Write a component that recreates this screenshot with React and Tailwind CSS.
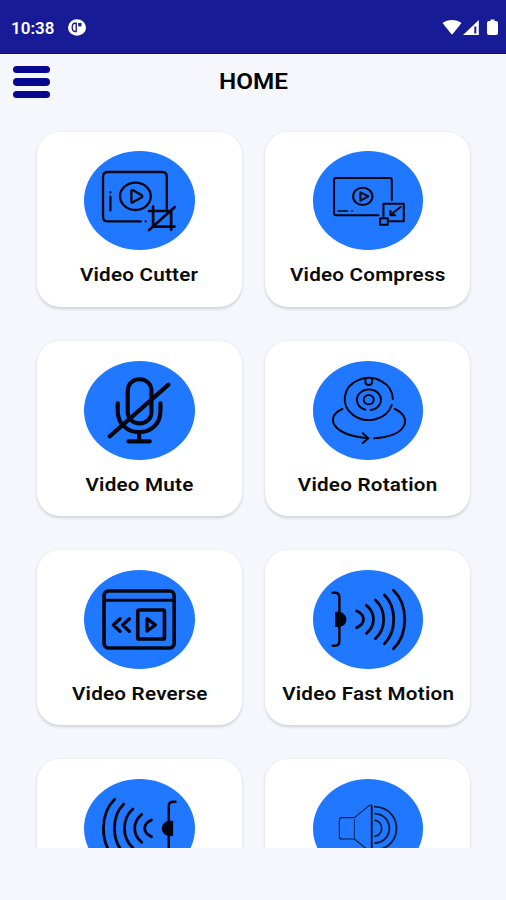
import React from "react";

function Oval({ box, children }) {
  return (
    <div className="h-[99px] w-[110.5px] shrink-0 overflow-hidden rounded-[50%] bg-[#1f78ff]">
      <svg
        viewBox={box}
        preserveAspectRatio="none"
        className="h-full w-full"
        fill="none"
        stroke="#020611"
        strokeLinecap="round"
        strokeLinejoin="round"
      >
        {children}
      </svg>
    </div>
  );
}

const CutterIcon = () => (
  <Oval box="162 78 331 297">
    <g strokeWidth="7">
      <path d="M332 289H233Q219 289 219 275V155Q219 141 233 141H396Q410 141 410 155V252" />
      <path d="M241 215V256M241 202v.1M347 289v.1" />
      <ellipse cx="316" cy="214" rx="46" ry="41" />
      <path d="M304 198V231Q304 234 308 232L335 217Q338 214 335 211L309 196Q304 194 304 198Z" />
      <path d="M357 258H423V314M369 245V305H433M357 315L434 246" strokeWidth="8" />
    </g>
  </Oval>
);

const CompressIcon = () => (
  <Oval box="162 78 331 297">
    <g strokeWidth="6.2">
      <path d="M358 271H231Q225 271 225 265V165Q225 159 231 159H392Q398 159 398 165V225" />
      <ellipse cx="311" cy="214" rx="29" ry="26" />
      <path d="M304 202V227L328 214Z" />
      <path d="M373 274V236H434V289H390" />
      <path d="M363 280H386V299H363Z" />
      <path d="M424 246L394 270M394 258V271H408" />
      <path d="M237 258H266M278 258H280" strokeWidth="4" />
    </g>
  </Oval>
);

const MuteIcon = () => (
  <Oval box="162 76 331 297">
    <g strokeWidth="12.5">
      <path d="M293 166C293 119 364 119 364 166V228C364 275 293 275 293 228Z" />
      <path d="M263 203V225C263 311 391 311 391 225V203" />
      <path d="M327 291V316M295 317H359M239 302L415 147" />
    </g>
  </Oval>
);

const RotationIcon = () => (
  <Oval box="162 76 331 297">
    <g strokeWidth="6">
      <path d="M401 190A72 63 0 1 0 398 208" />
      <path d="M319 131V139C319 151 339 151 339 139V131" />
      <path d="M319 222A36 31 0 1 1 335 223" />
      <ellipse cx="329" cy="192" rx="15" ry="14" />
      <path d="M250 220C198 243 214 297 327 308M311 293L328 308L311 322" />
      <path d="M407 220C459 243 449 301 345 308" />
    </g>
  </Oval>
);

const ReverseIcon = () => (
  <Oval box="162 73 331 297">
    <g strokeWidth="11">
      <rect x="222" y="136" width="210" height="171" rx="14" ry="14" />
      <path d="M223 164H431" strokeWidth="9" />
      <rect x="323" y="193" width="80" height="87" rx="4" />
      <path d="M351 219V256L376 238Z" strokeWidth="10" />
      <path d="M270 219L250 238L270 257M298 219L278 238L298 257" strokeWidth="10" />
    </g>
  </Oval>
);

const Motion = () => (
  <>
    <path d="M221 141H228Q241 141 241 155V287Q241 300 228 300H221" strokeWidth="7.5" />
    <path d="M228 198H238C270 200 270 243 238 244H228Z" fill="#000511" stroke="none" />
    <g strokeWidth="8.5">
      <path d="M293 196C320 208 320 234 293 246" />
      <path d="M322 179C350 201 350 241 322 263" />
      <path d="M349 163C382 193 382 249 349 279" />
      <path d="M376 148C413 184 413 258 376 294" />
      <path d="M403 134C448 177 448 265 403 309" />
    </g>
  </>
);

const FastMotionIcon = () => (
  <Oval box="162 73 331 297">
    <Motion />
  </Oval>
);

const SlowMotionIcon = () => (
  <Oval box="162 73 331 297">
    <g transform="translate(657 0) scale(-1 1)">
      <Motion />
    </g>
  </Oval>
);

const VolumeIcon = () => (
  <Oval box="162 85 331 297">
    <g strokeWidth="3.5" strokeOpacity="0.8">
      <path d="M286 201H248Q241 201 241 208V258Q241 265 248 265H286L330 301Q339 307 339 298V168Q339 158 330 165L286 201" />
      <path d="M286 207V261" strokeWidth="2.5" />
      <path d="M337 167V299" strokeWidth="4" />
      <path d="M347 168C434 172 434 294 347 298" strokeWidth="5.5" />
      <path d="M348 189C405 193 405 273 348 277" strokeWidth="5.5" />
      <path d="M348 209C374 213 374 253 348 257" strokeWidth="5.5" />
    </g>
  </Oval>
);

const tiles = [
  { id: "cutter", label: "Video Cutter", Icon: CutterIcon },
  { id: "compress", label: "Video Compress", Icon: CompressIcon },
  { id: "mute", label: "Video Mute", Icon: MuteIcon },
  { id: "rotation", label: "Video Rotation", Icon: RotationIcon },
  { id: "reverse", label: "Video Reverse", Icon: ReverseIcon },
  { id: "fast", label: "Video Fast Motion", Icon: FastMotionIcon },
  { id: "slow", Icon: SlowMotionIcon },
  { id: "volume", Icon: VolumeIcon },
];

function Tile({ label, Icon }) {
  return (
    <div className="flex h-[175.5px] flex-col items-center rounded-[23px] bg-white pt-[19.8px] shadow-[0_1.5px_3px_rgba(40,40,60,0.18)]">
      <Icon />
      {label && (
        <span className="mt-[13px] scale-x-[1.115] text-[18.5px] font-semibold leading-[25px] tracking-[0.2px] whitespace-nowrap text-[#0b0b0b]">
          {label}
        </span>
      )}
    </div>
  );
}

function StatusBar() {
  return (
    <div className="flex h-[54px] items-center border-b border-[#0b0b82] bg-[#171b96] pt-[2.500px] pr-[8px] pl-[11px] text-white">
      <span className="mt-[1.5px] w-[43px] origin-left scale-x-[1.06] text-[16px] font-semibold leading-none">10:38</span>
      <svg viewBox="0 0 18 17" className="ml-[13.500px] h-[17px] w-[18px]" fill="none">
        <ellipse cx="9" cy="8.5" rx="9" ry="8.3" fill="white" />
        <path d="M8.200 4.300H7Q4.200 4.300 4.200 8.300Q4.200 12.500 7 12.500H8.200Z" stroke="#171b96" strokeWidth="1.4" />
        <path d="M10.200 4H13.500V7.400H10.200Z" fill="#171b96" />
      </svg>
      <svg viewBox="442 19 56 17" className="ml-auto h-[17px] w-[56px]" fill="white">
        <path d="M442.500 23Q446.500 20 452 20Q457.500 20 461.500 23L452.700 34Q452 34.800 451.300 34Z" />
        <path d="M463 35L478.800 20V35Z" />
        <path d="M474.300 26.500H476.300V33.500H474.300Z" fill="#171b96" />
        <path d="M489 21H490.500V19.500H494.500V21H496Q498 21 498 23V33Q498 35 496 35H489Q487 35 487 33V23Q487 21 489 21Z" />
      </svg>
    </div>
  );
}

export default function App() {
  return (
    <div className="flex h-[900px] w-[506px] flex-col overflow-hidden bg-[#f5f7fd] font-[Roboto,sans-serif]">
      <StatusBar />
      <header className="grid h-[55px] shrink-0 grid-cols-[1fr_auto_1fr] items-center border-t border-white pr-[12px] pl-[12.500px]">
        <div className="flex flex-col gap-[5px]">
          <i className="h-[7.6px] w-[37.5px] rounded-full bg-[#07088f]" />
          <i className="h-[7.6px] w-[37.5px] rounded-full bg-[#07088f]" />
          <i className="h-[7.6px] w-[37.5px] rounded-full bg-[#07088f]" />
        </div>
        <h1 className="scale-x-[1.13] text-[21.5px] leading-none font-semibold text-black">HOME</h1>
      </header>
      <main className="h-[739px] shrink-0 overflow-hidden px-[37px] pt-[22.7px]">
        <div className="grid grid-cols-[205px_205px] gap-x-[23.400px] gap-y-[33.600px]">
          {tiles.map(({ id, ...tile }) => (
            <Tile key={id} {...tile} />
          ))}
        </div>
      </main>
    </div>
  );
}
